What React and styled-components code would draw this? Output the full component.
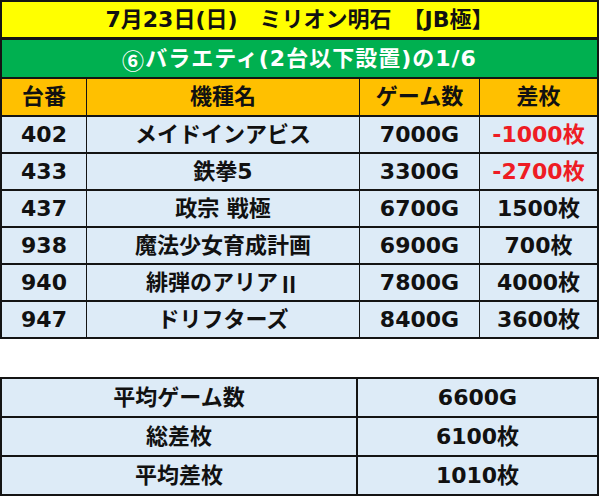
import React from "react";
import styled, { createGlobalStyle } from "styled-components";

const Global = createGlobalStyle`
  html, body { margin: 0; padding: 0; background: #ffffff; }
  body { font-family: "DejaVu Sans", "Noto Sans CJK JP", sans-serif; }
`;

const Page = styled.div`
  width: 599px;
  display: flex;
  flex-direction: column;
  gap: 38px;
`;

const Grid = styled.div`
  display: flex;
  flex-direction: column;
  gap: 2px;
  background: #141414;
  padding: 2px;
`;

const Banner = styled.div`
  height: ${(p) => p.$h}px;
  margin-top: ${(p) => p.$mt || 0}px;
  background: ${(p) => p.$bg};
  color: ${(p) => p.$fg};
  display: flex;
  align-items: center;
  justify-content: center;
  font-weight: bold;
  font-size: 22px;
  line-height: 1;
  letter-spacing: ${(p) => p.$ls || 0}px;
`;

const Row = styled.div`
  display: grid;
  grid-template-columns: 84px 272px 119px 117px;
  column-gap: 1px;
  height: ${(p) => p.$h}px;
`;

const Cell = styled.div`
  background: ${(p) => p.$bg};
  color: ${(p) => (p.$red ? "#ee1c24" : "#111111")};
  display: flex;
  align-items: center;
  justify-content: center;
  font-weight: bold;
  font-size: 22px;
  line-height: 1;
  white-space: nowrap;
`;

const SummaryGrid = styled.div`
  display: grid;
  grid-template-columns: 354px 1fr;
  gap: 2px;
  padding: 2px;
  background: #141414;
`;

const SummaryCell = styled.div`
  height: 37px;
  background: #ddebf7;
  color: #111111;
  display: flex;
  align-items: center;
  justify-content: center;
  font-weight: bold;
  font-size: 22px;
  line-height: 1;
`;

const Cjk = styled.span`
  font-family: "Noto Sans CJK JP", sans-serif;
`;

const rows = [
  ["402", "メイドインアビス", "7000G", "-1000枚", true],
  ["433", "鉄拳5", "3300G", "-2700枚", true],
  ["437", "政宗 戦極", "6700G", "1500枚", false],
  ["938", "魔法少女育成計画", "6900G", "700枚", false],
  ["940", <>緋弾のアリア<Cjk>Ⅱ</Cjk></>, "7800G", "4000枚", false],
  ["947", "ドリフターズ", "8400G", "3600枚", false],
];

const summary = [
  ["平均ゲーム数", "6600G"],
  ["総差枚", "6100枚"],
  ["平均差枚", "1010枚"],
];

export default function App() {
  return (
    <>
      <Global />
      <Page>
        <Grid>
          <Banner $h={35} $bg="#ffff00" $fg="#111111">
            7月23日(日)　ミリオン明石　【JB極】
          </Banner>
          <Banner $h={37} $mt={1} $bg="#00b050" $fg="#ffffff" $ls={1}>
            <Cjk>⑥</Cjk>バラエティ(2台以下設置)の1/6
          </Banner>
          <Row $h={36}>
            {["台番", "機種名", "ゲーム数", "差枚"].map((t) => (
              <Cell key={t} $bg="#ffc000">{t}</Cell>
            ))}
          </Row>
          {rows.map(([no, name, games, diff, neg]) => (
            <Row key={no} $h={35}>
              <Cell $bg="#ddebf7">{no}</Cell>
              <Cell $bg="#ddebf7">{name}</Cell>
              <Cell $bg="#ddebf7">{games}</Cell>
              <Cell $bg="#ddebf7" $red={neg}>{diff}</Cell>
            </Row>
          ))}
        </Grid>
        <SummaryGrid>
          {summary.map(([k, v]) => (
            <React.Fragment key={k}>
              <SummaryCell>{k}</SummaryCell>
              <SummaryCell>{v}</SummaryCell>
            </React.Fragment>
          ))}
        </SummaryGrid>
      </Page>
    </>
  );
}
